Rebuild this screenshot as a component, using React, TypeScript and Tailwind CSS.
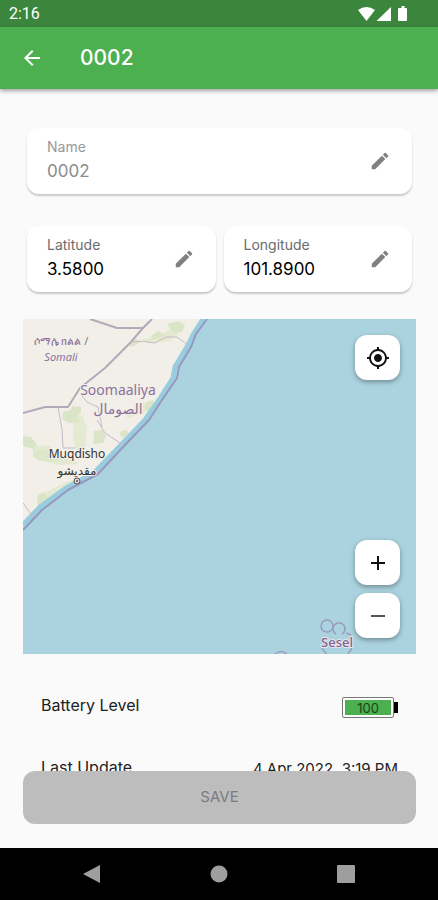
import { useState } from "react";
import { MdAdd, MdArrowBack, MdEdit, MdMyLocation, MdRemove } from "react-icons/md";

interface FieldProps {
  id: string;
  label: string;
  value: string;
  disabled?: boolean;
  onChange: (value: string) => void;
}

const Field = ({ id, label, value, disabled, onChange }: FieldProps) => (
  <div className="flex h-[66px] min-w-0 flex-1 items-center rounded-xl bg-white px-5 shadow-[0_2px_2px_rgba(0,0,0,0.2)]">
    <div className="flex min-w-0 flex-1 flex-col">
      <label
        htmlFor={id}
        className={`text-sm leading-5 ${disabled ? "text-[#999999]" : "text-[#6b6b6b]"}`}
      >
        {label}
      </label>
      <input
        id={id}
        value={value}
        disabled={disabled}
        onChange={(e) => onChange(e.target.value)}
        className="w-full bg-transparent text-[17px] leading-7 text-black outline-none disabled:text-[#8c8c8c]"
      />
    </div>
    <button type="button" aria-label={`Edit ${label}`} className="ml-2 text-[#808080]">
      <MdEdit className="size-6 p-px" />
    </button>
  </div>
);

const StatusBar = () => (
  <div className="flex h-[27px] shrink-0 items-center justify-between bg-[#3b853d] pr-[30px] pl-[9px] text-white">
    <span className="font-[Roboto,sans-serif] text-base">2:16</span>
    <svg viewBox="0 0 50 16" className="h-4 w-[50px]" fill="currentColor">
      <path d="M0 4Q8.5-2 17 4L8.500 15Z" />
      <path d="M33 1V15H18.500Z" />
      <path d="M42 2h1.500V0h3v2H48q1 0 1 1v11q0 1-1 1h-7q-1 0-1-1V3q0-1 1-1Z" />
    </svg>
  </div>
);

const MapDrawing = () => (
  <svg
    viewBox="0 0 393 335"
    preserveAspectRatio="xMidYMid slice"
    className="h-[335px] w-full bg-[#aad3df]"
    fontFamily="'Noto Sans', 'DejaVu Sans', sans-serif"
    textAnchor="middle"
  >
    <path
      d="M0 0H180L171 15L164 28L152 48L150 59L136 81L122 101L99 125L71 154L43 169L17 188L0 206Z"
      fill="#f2efe9"
    />
    {/* vegetation */}
    <g fill="#d0e2ba" opacity="0.7">
      <path d="M144 5l12-3 6 4-3 7-8 1-4-4Z" />
      <path d="M128 17l7-5 6 3-3 4-9 2Z" />
      <path d="M104 25l9-5 5 3-9 5Z" />
      <path d="M40 93l8-2 1-4 9 1v5l-3 3 2 7-11 1-7-4Z" />
      <path d="M71 112l8-1 4 6-3 7-10 1Z" />
      <path d="M98 112l6-1 1 4-5 4-3-3Z" />
      <path d="M123 83l7-2 1 7-6 5-4-3Z" />
      <path d="M0 117l8 1 6 8-4 4-10-3Z" />
      <path d="M11 133l12-3 4 5 9 3-3 5-18-2-5-4Z" />
      <path d="M15 176l6-3 4 4-1 6-6 6-4-5Z" />
    </g>
    <g fill="#dfe9c9" opacity="0.7">
      <path d="M51 97l8-1 5 13-2 22-9 1-3-12Z" />
      <path d="M120 20l17-3 10-7 9 4-9 8-22 2Z" />
      <path d="M101 96l18-13 4 1-1 10-17 5Z" />
      <path d="M10 128l15-2 12 10 14 3 4 6-18 1-18-4-9-6Z" />
      <path d="M23 173l20-10 16-5 4 3-20 10-14 9-4-2Z" />
    </g>
    <path
      d="M180 0L170 16L164 28L152 48L150 59L136 81L122 101L99 125L71 154L43 169L17 188L0 206"
      fill="none"
      stroke="#9accdf"
      strokeWidth="5"
    />
    <g fill="none" strokeLinejoin="round">
      <path
        d="M184 0L173 15L168 28L156 48L154 59L139 81L126 101L102 126L75 155L45 171L19 191L0 211"
        stroke="#9698bf"
        strokeWidth="2"
      />
      <path
        d="M67 0L94 9H120L129 0M120 9L107 24L82 49L57 69L45 88H22L0 94"
        stroke="#b3a9b8"
        strokeWidth="2"
      />
      <path
        d="M107 23Q120 21 132 24L143 18L154 18L165 26M59 77L64 83L75 88L79 108M74 101L82 114L100 126M35 88L39 110L40 129H52M0 184L10 198"
        stroke="#c8b9c8"
        strokeWidth="1"
      />
    </g>
    <g stroke="#f2efe9" strokeWidth="2" paintOrder="stroke" strokeLinejoin="round">
      <g fill="#8b729b">
        <text x="38" y="26" fontSize="11">ሶማሌ ክልል /</text>
        <text x="38" y="42" fontSize="11" fontStyle="italic">Somali</text>
        <text x="95" y="76" fontSize="14">Soomaaliya</text>
        <text x="95" y="95" fontSize="14">الصومال</text>
      </g>
      <g fill="#333333">
        <text x="54" y="139" fontSize="12">Muqdisho</text>
        <text x="54" y="156" fontSize="12">مقديشو</text>
      </g>
    </g>
    <circle cx="54" cy="162" r="3" fill="#d8d8d8" stroke="#555555" />
    <circle cx="54" cy="162" r="1" fill="#555555" />
    {/* island rings */}
    <g fill="none" stroke="#9a9cbd" strokeWidth="1.500">
      <circle cx="304" cy="307" r="6" />
      <path d="M313 315a6 6 0 1 1 6 0M299 329a15 15 0 0 0 5 6M325 335l4-6M252 335q6-5 12 0M323 314l5 2" />
    </g>
    <text
      x="314"
      y="328"
      fontSize="13"
      fontWeight="500"
      fill="#80618f"
      stroke="#e6e5ed"
      strokeWidth="2"
      paintOrder="stroke"
    >
      Sesel
    </text>
  </svg>
);

const mapButton =
  "flex size-[45px] items-center justify-center rounded-xl bg-white text-[#111111] shadow-[0_2px_5px_rgba(0,0,0,0.35)]";

const Battery = ({ level }: { level: number }) => (
  <div className="flex items-center">
    <div className="h-[21px] w-[52px] rounded-xs border border-[#777777] bg-white p-0.5">
      <div
        className="h-full bg-[#4caf50] text-center text-[13px] leading-4 text-[#17451a]"
        style={{ width: `${level}%` }}
      >
        {level}
      </div>
    </div>
    <div className="h-[11px] w-1 bg-black" />
  </div>
);

const App = () => {
  const [name, setName] = useState("0002");
  const [latitude, setLatitude] = useState("3.5800");
  const [longitude, setLongitude] = useState("101.8900");

  return (
    <div className="flex h-screen flex-col bg-[#fafafa] font-[Inter,sans-serif]">
      <StatusBar />
      <header className="z-10 flex h-[62px] shrink-0 items-center gap-9 bg-[#4caf50] px-5 text-white shadow-[0_2px_4px_rgba(0,0,0,0.35)]">
        <button type="button" aria-label="Back">
          <MdArrowBack className="size-6" />
        </button>
        <h1 className="text-[21px] font-medium">{name}</h1>
      </header>

      <main className="relative min-h-0 flex-1 overflow-hidden">
        <div className="flex flex-col pt-[39px] pr-[22px] pl-[23px]">
          <div className="flex flex-col gap-8 px-1">
            <div className="flex">
              <Field id="name" label="Name" value={name} disabled onChange={setName} />
            </div>
            <div className="flex gap-2">
              <Field id="latitude" label="Latitude" value={latitude} onChange={setLatitude} />
              <Field id="longitude" label="Longitude" value={longitude} onChange={setLongitude} />
            </div>
          </div>

          <section aria-label="Map" className="relative mt-[27px]">
            <MapDrawing />
            <div className="absolute inset-y-4 right-4 flex flex-col gap-2">
              <button type="button" aria-label="My location" className={mapButton}>
                <MdMyLocation className="size-6" />
              </button>
              <button type="button" aria-label="Zoom in" className={`${mapButton} mt-auto`}>
                <MdAdd className="size-6" />
              </button>
              <button type="button" aria-label="Zoom out" className={`${mapButton} text-[#555555]`}>
                <MdRemove className="size-6" />
              </button>
            </div>
          </section>

          <dl className="mt-5 px-[18px] text-base text-[#222222]">
            <div className="flex h-[62px] items-center justify-between">
              <dt>Battery Level</dt>
              <dd className="pt-1">
                <Battery level={100} />
              </dd>
            </div>
            <div className="flex h-[62px] items-center justify-between">
              <dt>Last Update</dt>
              <dd className="pt-1 text-[15px]">4 Apr 2022, 3:19 PM</dd>
            </div>
          </dl>
        </div>

        <button
          type="button"
          disabled
          className="absolute right-[22px] bottom-6 left-[23px] h-[53px] rounded-xl bg-[#bdbdbd] text-[15px] text-[#7b7b7b]"
        >
          SAVE
        </button>
      </main>

      <nav className="flex h-[52px] shrink-0 items-center justify-around bg-black px-7 text-[#9e9e9e]">
        <button type="button" aria-label="System back">
          <svg viewBox="0 0 18 18" className="size-[18px]" fill="currentColor">
            <path d="M17 0V18L0 9Z" />
          </svg>
        </button>
        <button type="button" aria-label="Home">
          <svg viewBox="0 0 18 18" className="size-[18px]" fill="currentColor">
            <circle cx="9" cy="9" r="8.500" />
          </svg>
        </button>
        <button type="button" aria-label="Recent apps">
          <svg viewBox="0 0 18 18" className="size-[18px]" fill="currentColor">
            <rect width="18" height="18" rx="1" />
          </svg>
        </button>
      </nav>
    </div>
  );
};

export default App;
